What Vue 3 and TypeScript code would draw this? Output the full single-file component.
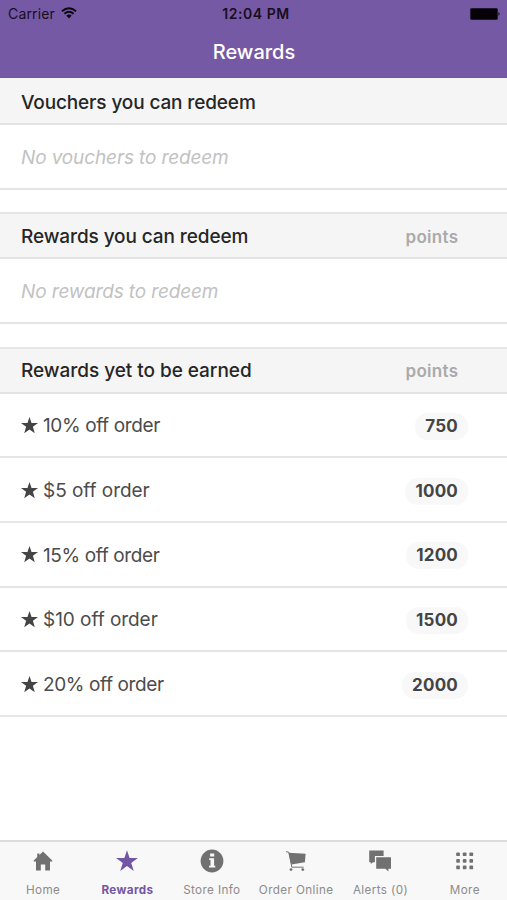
<script setup lang="ts">
interface Reward {
  name: string
  points: number
}

interface Tab {
  icon: string
  label: string
  active?: boolean
}

const rewards: Reward[] = [
  { name: '10% off order', points: 750 },
  { name: '$5 off order', points: 1000 },
  { name: '15% off order', points: 1200 },
  { name: '$10 off order', points: 1500 },
  { name: '20% off order', points: 2000 },
]

const tabs: Tab[] = [
  { icon: 'home', label: 'Home' },
  { icon: 'star', label: 'Rewards', active: true },
  { icon: 'info', label: 'Store Info' },
  { icon: 'cart', label: 'Order Online' },
  { icon: 'chat', label: 'Alerts (0)' },
  { icon: 'grid', label: 'More' },
]

const dots = [1.6, 8.2, 14.8]
</script>

<template>
  <div class="screen">
    <header class="header">
      <div class="status">
        <div class="carrier">
          <span>Carrier</span>
          <svg class="wifi" viewBox="0 0 16 12" fill="none" stroke="#0a0510" stroke-width="1.9">
            <path d="M.9 4.2Q8-1.9 15.1 4.2" />
            <path d="M3.4 6.8Q8 2.8 12.6 6.8" />
            <path d="M5.3 8.6Q8 6.2 10.7 8.6L8 11.5Z" fill="#0a0510" stroke="none" />
          </svg>
        </div>
        <span class="time">12:04 PM</span>
        <div class="battery">
          <svg viewBox="0 0 31 12" fill="#050208">
            <rect x="0.3" y="0.3" width="27.4" height="11.4" rx="1.3" />
            <path d="M28.5 4.1q2.2 1.9 0 3.8z" />
          </svg>
        </div>
      </div>
      <h1 class="title">Rewards</h1>
    </header>

    <main class="content">
      <section class="group">
        <div class="head head-first">
          <h2 class="head-vouchers">Vouchers you can redeem</h2>
        </div>
        <div class="row"><em>No vouchers to redeem</em></div>
      </section>
      <section class="group">
        <div class="head">
          <h2 class="head-redeem">Rewards you can redeem</h2>
          <span class="points">points</span>
        </div>
        <div class="row"><em>No rewards to redeem</em></div>
      </section>
      <section class="group">
        <div class="head">
          <h2 class="head-earned">Rewards yet to be earned</h2>
          <span class="points">points</span>
        </div>
        <div v-for="reward in rewards" :key="reward.points" class="row">
          <svg class="row-star" viewBox="0 0 20 20">
            <path d="M10 0L12.4 7.1H20L14 11.6L16.2 19L10 14.6L3.8 19L6 11.6L0 7.1H7.6Z" />
          </svg>
          <span class="name" :class="{ percent: reward.name.includes('%') }">{{ reward.name }}</span>
          <span class="badge">{{ reward.points }}</span>
        </div>
      </section>
    </main>

    <nav class="tabs">
      <div v-for="tab in tabs" :key="tab.label" class="tab" :class="{ active: tab.active }">
        <svg class="icon" viewBox="0 0 24 24">
          <path v-if="tab.icon === 'home'" d="M12 2.5L21.3 11.5V12.5H19V21.5H14.2V15.5H9.8V21.5H5V12.5H2.7V11.5L6.2 8.1V4.6H8.4V6Z" />
          <path v-else-if="tab.icon === 'star'" d="M12 1.2L14.6 9.1H22.9L16.2 14L18.8 21.9L12 17L5.2 21.9L7.8 14L1.1 9.1H9.4Z" />
          <template v-else-if="tab.icon === 'info'">
            <circle cx="12" cy="12" r="11.4" />
            <path fill="#f8f8f8" d="M10.1 4.5h4.1v3h-4.1zM9.2 9.3h4.9v7.5h1.2v1.7H9v-1.7h1.5v-5.8H9.2z" />
          </template>
          <template v-else-if="tab.icon === 'cart'">
            <path d="M4.6 3.8L21.6 4.8L20.9 13.2L7.4 15.6Z" />
            <path fill="none" stroke="currentColor" stroke-width="1" d="M2 2.6L4.8 3.3L7.8 18.2H19.6" />
            <circle cx="7" cy="20.6" r="1.4" />
            <circle cx="18.8" cy="20.6" r="1.4" />
          </template>
          <template v-else-if="tab.icon === 'chat'">
            <path d="M1.2 1.4H15.6V7H6.9V13.3H5.1L2.8 15.1V13.3H1.2Z" />
            <path d="M8.2 8.2H23V19.7H20.4V22.4L17.4 19.7H8.2Z" />
          </template>
          <g v-else transform="translate(1.6 1.8)">
            <template v-for="y in dots" :key="y">
              <rect v-for="x in dots" :key="x" :x="x" :y="y" width="3.7" height="3.7" rx="0.9" />
            </template>
          </g>
        </svg>
        <span class="label">{{ tab.label }}</span>
      </div>
    </nav>
  </div>
</template>

<style>
body {
  margin: 0;
  background: #fff;
}
</style>

<style scoped>
.screen {
  display: flex;
  flex-direction: column;
  height: 900px;
  overflow: hidden;
  background: #fff;
  color: #444;
  font-family: Inter, 'Liberation Sans', sans-serif;
}

.header {
  box-sizing: border-box;
  height: 78px;
  flex: none;
  background: #7659a5;
  border-bottom: 1px solid #7155a0;
}

.status {
  display: grid;
  grid-template-columns: 1fr auto 1fr;
  height: 27px;
  align-items: center;
  padding: 0 6px 0 8px;
  color: #160e20;
  font-size: 14px;
  line-height: 27px;
}

.carrier {
  display: flex;
  align-items: center;
  gap: 6px;
  letter-spacing: 0.15px;
}

.wifi {
  width: 16px;
  height: 12px;
  margin-bottom: 1px;
}

.time {
  padding-left: 3px;
  font-weight: 600;
  font-size: 14px;
  letter-spacing: 0.55px;
}

.battery {
  display: flex;
  justify-content: flex-end;
}

.battery svg {
  width: 31px;
  height: 12px;
}

.title {
  margin: 0;
  padding-left: 1px;
  color: #fff;
  font-size: 20px;
  font-weight: 500;
  line-height: 50px;
  text-align: center;
}

.content {
  flex: 1;
}

.group {
  margin-bottom: 22.6px;
}

.head {
  box-sizing: border-box;
  display: flex;
  align-items: center;
  justify-content: space-between;
  height: 47px;
  padding: 1px 49px 0 21px;
  background: #f5f5f5;
  border-top: 2px solid #e6e6e6;
  border-bottom: 2px solid #e3e3e3;
}

.head-first {
  border-top-color: #f5f5f5;
}

h2 {
  margin: 0;
  color: #262626;
  font-size: 19px;
  font-weight: 500;
  white-space: nowrap;
}

.head-vouchers {
  letter-spacing: -0.13px;
}

.head-redeem {
  letter-spacing: -0.1px;
}

.head-earned {
  letter-spacing: -0.04px;
}

.points {
  padding-top: 1px;
  color: #aaa;
  font-size: 17px;
  font-weight: 600;
  letter-spacing: 0.3px;
  margin-right: -0.3px;
}

.row {
  box-sizing: border-box;
  display: flex;
  align-items: center;
  height: 64.7px;
  padding: 1px 39px 0 21px;
  border-bottom: 2px solid #e6e6e6;
}

em {
  padding-top: 1px;
  color: #c2c2c2;
  font-size: 19px;
  letter-spacing: -0.13px;
  white-space: nowrap;
}

.row-star {
  width: 17px;
  height: 17px;
  margin: 0 5px 0 0;
  fill: #444;
}

.name {
  padding-top: 1px;
  font-size: 19px;
  letter-spacing: -0.05px;
  color: #4c4c4c;
}

.percent {
  letter-spacing: -0.38px;
}

.badge {
  margin: 2px 0 0 auto;
  padding: 0 10px;
  border-radius: 13px;
  background: #f8f8f8;
  font-size: 17px;
  font-weight: 700;
  line-height: 27px;
  letter-spacing: 0.2px;
}

.tabs {
  box-sizing: border-box;
  display: grid;
  grid-template-columns: repeat(6, 1fr);
  flex: none;
  height: 60px;
  padding: 7px 0 0 1px;
  background: #f8f8f8;
  border-top: 2px solid #dcdcdc;
}

.tab {
  display: flex;
  flex-direction: column;
  align-items: center;
  color: #717171;
}

.icon {
  width: 24px;
  height: 24px;
  fill: currentColor;
}

.label {
  margin-top: 9px;
  color: #8c8c8c;
  font-size: 11.7px;
  line-height: 16px;
  letter-spacing: 0.38px;
  white-space: nowrap;
}

.active,
.active .label {
  color: #7256a5;
}

.active .label {
  font-weight: 700;
}
</style>
